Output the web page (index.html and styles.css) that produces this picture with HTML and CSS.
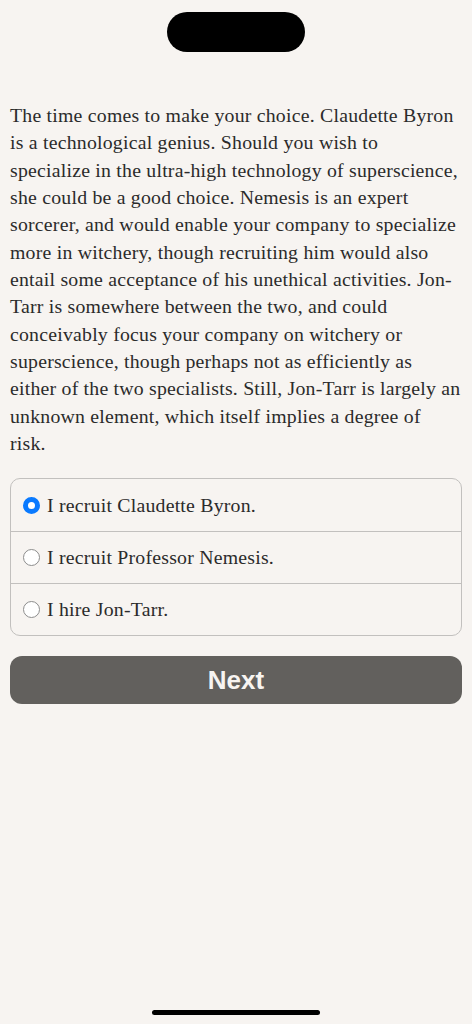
FILE: index.html
```html
<!DOCTYPE html>
<html lang="en">
<head>
<meta charset="utf-8">
<title>Choice</title>
<link rel="stylesheet" href="styles.css">
</head>
<body>
<div class="screen">
  <div class="island"></div>
  <main class="content">
    <p class="story">The time comes to make your choice. Claudette Byron is a technological genius. Should you wish to specialize in the ultra-high technology of superscience, she could be a good choice. Nemesis is an expert sorcerer, and would enable your company to specialize more in witchery, though recruiting him would also entail some acceptance of his unethical activities. Jon-Tarr is somewhere between the two, and could conceivably focus your company on witchery or superscience, though perhaps not as efficiently as either of the two specialists. Still, Jon-Tarr is largely an unknown element, which itself implies a degree of risk.</p>
    <form class="choices">
      <label class="choice">
        <input type="radio" name="pick" checked>
        <span>I recruit Claudette Byron.</span>
      </label>
      <label class="choice">
        <input type="radio" name="pick">
        <span>I recruit Professor Nemesis.</span>
      </label>
      <label class="choice">
        <input type="radio" name="pick">
        <span>I hire Jon-Tarr.</span>
      </label>
    </form>
    <button class="next" type="button">Next</button>
  </main>
  <div class="home-bar"></div>
</div>
</body>
</html>
```
FILE: styles.css
```css
* { box-sizing: border-box; }

html, body {
  margin: 0;
  padding: 0;
  background: #f7f4f1;
}

.screen {
  width: 472px;
  height: 1024px;
  display: flex;
  flex-direction: column;
  align-items: center;
  padding-top: 12px;
}

.island {
  width: 138px;
  height: 40px;
  border-radius: 20px;
  background: #000;
}

.content {
  width: 100%;
  padding: 0 10px;
  flex: 1;
}

.story {
  margin: 50px 1px 0 0;
  font-family: "Liberation Serif", serif;
  font-size: 19.8px;
  letter-spacing: 0.22px;
  line-height: 27.33px;
  color: #2b2b2b;
}

.choices {
  margin: 21px 0 0;
  border: 1px solid #c2c0be;
  border-radius: 10px;
  overflow: hidden;
}

.choice {
  display: flex;
  align-items: center;
  gap: 7px;
  height: 52px;
  padding: 0 12px;
  font-family: "Liberation Serif", serif;
  font-size: 19.8px;
  letter-spacing: 0.22px;
  color: #2b2b2b;
}

.choice + .choice {
  border-top: 1px solid #c2c0be;
}

.choice input {
  appearance: none;
  margin: 0;
  width: 17px;
  height: 17px;
  border-radius: 50%;
  border: 1.5px solid #8d8d8d;
  background: #fff;
  flex: none;
}

.choice input:checked {
  border: 5px solid #0a7aff;
  background: #fff;
}

.next {
  display: block;
  width: 100%;
  height: 48px;
  margin-top: 20px;
  border: none;
  border-radius: 12px;
  background: #62605d;
  color: #f7f4f1;
  font-family: "Liberation Sans", Arial, sans-serif;
  font-weight: bold;
  font-size: 26px;
}

.home-bar {
  width: 168px;
  height: 5px;
  border-radius: 3px;
  background: #000;
  margin-bottom: 9px;
}
```
